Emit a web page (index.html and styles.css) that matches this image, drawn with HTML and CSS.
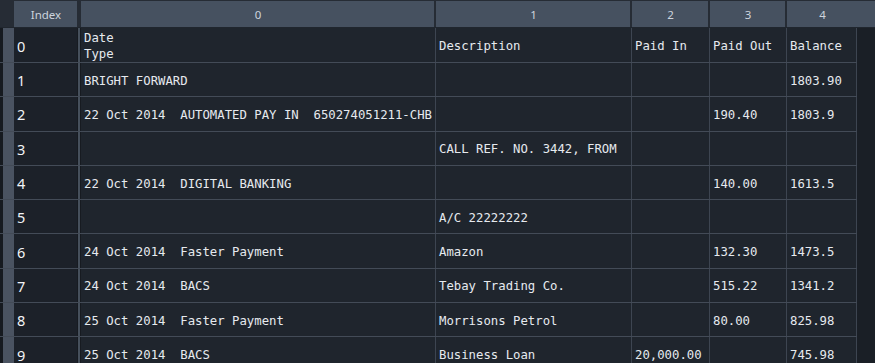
FILE: index.html
```html
<!DOCTYPE html>
<html lang="en">
<head>
    <meta charset="UTF-8">
    <title>DataFrame Viewer</title>
    <link rel="stylesheet" href="styles.css">
</head>
<body>
    <div class="grid">
        <div class="row head">
            <div class="gutter"></div>
            <div class="hcell">Index</div>
            <div class="sep"></div>
            <div class="hcell">0</div>
            <div class="hcell">1</div>
            <div class="hcell">2</div>
            <div class="hcell">3</div>
            <div class="hcell">4</div>
            <div class="filler"></div>
        </div>

        <div class="row tall">
            <div class="gutter"></div>
            <div class="idx">0</div>
            <div class="sep"></div>
            <div class="cell">Date<br>Type</div>
            <div class="cell">Description</div>
            <div class="cell">Paid In</div>
            <div class="cell">Paid Out</div>
            <div class="cell">Balance</div>
            <div class="filler"></div>
        </div>
        <div class="row">
            <div class="gutter"></div>
            <div class="idx">1</div>
            <div class="sep"></div>
            <div class="cell">BRIGHT FORWARD</div>
            <div class="cell"></div>
            <div class="cell"></div>
            <div class="cell"></div>
            <div class="cell">1803.90</div>
            <div class="filler"></div>
        </div>
        <div class="row">
            <div class="gutter"></div>
            <div class="idx">2</div>
            <div class="sep"></div>
            <div class="cell">22 Oct 2014  AUTOMATED PAY IN  650274051211-CHB</div>
            <div class="cell"></div>
            <div class="cell"></div>
            <div class="cell">190.40</div>
            <div class="cell">1803.9</div>
            <div class="filler"></div>
        </div>
        <div class="row">
            <div class="gutter"></div>
            <div class="idx">3</div>
            <div class="sep"></div>
            <div class="cell"></div>
            <div class="cell">CALL REF. NO. 3442, FROM</div>
            <div class="cell"></div>
            <div class="cell"></div>
            <div class="cell"></div>
            <div class="filler"></div>
        </div>
        <div class="row">
            <div class="gutter"></div>
            <div class="idx">4</div>
            <div class="sep"></div>
            <div class="cell">22 Oct 2014  DIGITAL BANKING</div>
            <div class="cell"></div>
            <div class="cell"></div>
            <div class="cell">140.00</div>
            <div class="cell">1613.5</div>
            <div class="filler"></div>
        </div>
        <div class="row">
            <div class="gutter"></div>
            <div class="idx">5</div>
            <div class="sep"></div>
            <div class="cell"></div>
            <div class="cell">A/C 22222222</div>
            <div class="cell"></div>
            <div class="cell"></div>
            <div class="cell"></div>
            <div class="filler"></div>
        </div>
        <div class="row">
            <div class="gutter"></div>
            <div class="idx">6</div>
            <div class="sep"></div>
            <div class="cell">24 Oct 2014  Faster Payment</div>
            <div class="cell">Amazon</div>
            <div class="cell"></div>
            <div class="cell">132.30</div>
            <div class="cell">1473.5</div>
            <div class="filler"></div>
        </div>
        <div class="row">
            <div class="gutter"></div>
            <div class="idx">7</div>
            <div class="sep"></div>
            <div class="cell">24 Oct 2014  BACS</div>
            <div class="cell">Tebay Trading Co.</div>
            <div class="cell"></div>
            <div class="cell">515.22</div>
            <div class="cell">1341.2</div>
            <div class="filler"></div>
        </div>
        <div class="row">
            <div class="gutter"></div>
            <div class="idx">8</div>
            <div class="sep"></div>
            <div class="cell">25 Oct 2014  Faster Payment</div>
            <div class="cell">Morrisons Petrol</div>
            <div class="cell"></div>
            <div class="cell">80.00</div>
            <div class="cell">825.98</div>
            <div class="filler"></div>
        </div>
        <div class="row">
            <div class="gutter"></div>
            <div class="idx">9</div>
            <div class="sep"></div>
            <div class="cell">25 Oct 2014  BACS</div>
            <div class="cell">Business Loan</div>
            <div class="cell">20,000.00</div>
            <div class="cell"></div>
            <div class="cell">745.98</div>
            <div class="filler"></div>
        </div>
    </div>
</body>
</html>
```

FILE: styles.css
```css
body {
    margin: 0;
    background-color: #1f252d;
    overflow: hidden;
}
.grid {
    width: 875px;
    font-family: 'DejaVu Sans Mono', 'Liberation Mono', monospace;
    font-size: 12.3px;
    color: #e6eaef;
}
.row {
    display: grid;
    grid-template-columns: 14px 63px 4px 355px 196px 78px 77px 70px 1fr;
    height: 34.3px;
    box-sizing: border-box;
    border-bottom: 1px solid #434b57;
}
.row.tall {
    height: 35px;
}
.row.head {
    height: 28px;
    border-top: 1px solid #262c35;
    border-bottom: 1px solid #20262e;
    background-color: #20262e;
}
.gutter {
    background-color: #4a5361;
    border-left: 3px solid #161a20;
}
.head .gutter {
    background-color: #262c35;
    border-left: none;
}
.sep {
    background-color: #46505c;
    border-left: 1px solid #171b21;
    border-right: 1px solid #171b21;
}
.head .sep {
    background-color: #262c35;
    border: none;
}
.hcell {
    background-color: #465160;
    color: #cdd4dd;
    font-family: 'Noto Sans', 'Open Sans', sans-serif;
    font-size: 11.5px;
    display: flex;
    align-items: center;
    justify-content: center;
    padding-top: 1px;
    padding-left: 1px;
    border-right: 2px solid #262c35;
}
.head .hcell:nth-child(2),
.head .hcell:nth-child(8) {
    border-right: none;
}
.idx {
    background-color: #1c2129;
    color: #f2f4f7;
    font-family: 'Noto Sans', 'Open Sans', sans-serif;
    font-size: 14.5px;
    display: flex;
    align-items: center;
    padding-left: 3px;
    padding-top: 1px;
}
.cell {
    display: flex;
    align-items: center;
    padding-left: 3px;
    padding-top: 2px;
    white-space: pre;
    line-height: 16px;
    border-right: 1px solid #3d4551;
    overflow: hidden;
}
.filler {
    background-color: #1a1f26;
}
.head .filler {
    background-color: #465160;
}
.row:not(.head) .filler {
    margin-bottom: -1px;
}
```
